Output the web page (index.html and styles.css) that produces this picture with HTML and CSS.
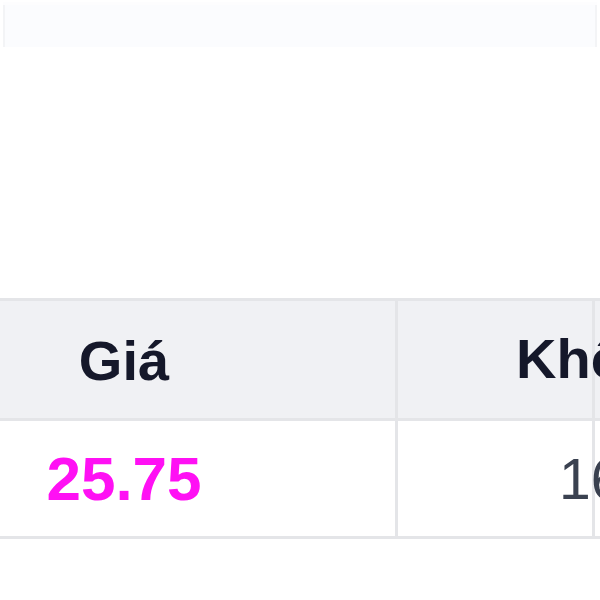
FILE: index.html
```html
<!DOCTYPE html>
<html lang="vi">
<head>
<meta charset="utf-8">
<link rel="stylesheet" href="styles.css">
</head>
<body>
<div class="page">
  <div class="band"></div>
  <div class="table-wrap">
    <table class="price-table">
      <colgroup>
        <col class="c-price">
        <col class="c-vol">
        <col class="c-rest">
      </colgroup>
      <thead>
        <tr>
          <th class="th-price">Giá</th>
          <th class="th-vol">Khối lượng</th>
          <th class="th-rest"></th>
        </tr>
      </thead>
      <tbody>
        <tr>
          <td class="td-price">25.75</td>
          <td class="td-vol">1600</td>
          <td class="td-rest"></td>
        </tr>
      </tbody>
    </table>
  </div>
</div>
</body>
</html>
```

FILE: styles.css
```css
html, body {
  margin: 0;
  padding: 0;
  background: #ffffff;
}

.page {
  width: 600px;
  height: 600px;
  overflow: hidden;
  font-family: "Liberation Sans", Arial, sans-serif;
}

.band {
  height: 42px;
  margin: 5px 3px 0 3px;
  background: #fbfcfe;
  border-left: 2px solid #f3f4f6;
  border-right: 2px solid #f3f4f6;
  box-shadow: 0 -3px 0 #fdfdfe;
}

.table-wrap {
  padding-top: 251px;
}

.price-table {
  margin-left: -150px;
  border-collapse: collapse;
  table-layout: fixed;
  width: 760px;
}

.c-price { width: 545px; }
.c-vol { width: 197px; }
.c-rest { width: 18px; }

.price-table th,
.price-table td {
  border: 3px solid #e4e5e8;
  white-space: nowrap;
  vertical-align: middle;
  padding: 0;
}

.price-table thead tr {
  height: 120px;
  background: #f0f1f4;
}

.price-table tbody tr {
  height: 118px;
  background: #ffffff;
}

.price-table th {
  font-size: 56px;
  font-weight: 700;
  color: #15182a;
  line-height: 1.15;
}

.th-price {
  text-align: center;
  padding-top: 4px !important;
}

.th-vol {
  text-align: left;
  padding-left: 118px !important;
}

.td-price {
  text-align: center;
  font-size: 62px;
  font-weight: 700;
  color: #ff10f4;
}

.td-vol {
  text-align: left;
  padding-left: 161px !important;
  font-size: 57px;
  font-weight: 400;
  color: #3a4150;
}
```
